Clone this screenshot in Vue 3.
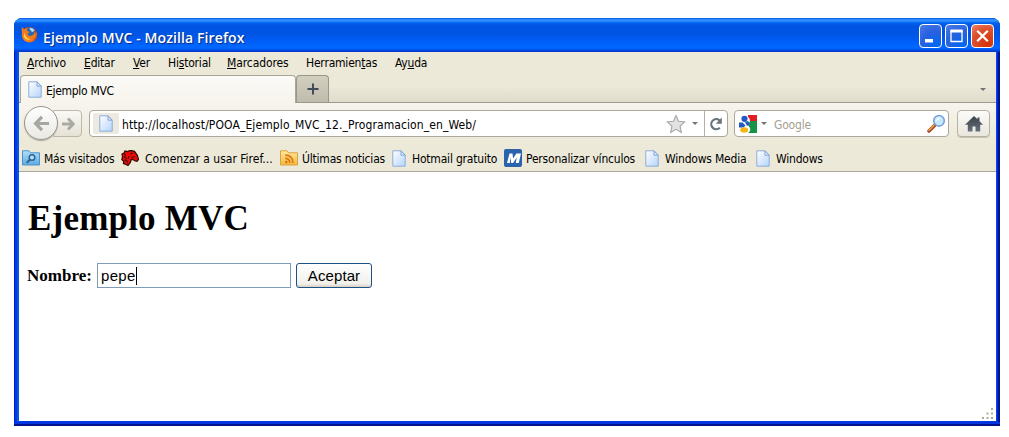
<script setup>
const menus = [
  { pre: '', key: 'A', post: 'rchivo', cls: 'm1' },
  { pre: '', key: 'E', post: 'ditar', cls: 'm2' },
  { pre: '', key: 'V', post: 'er', cls: 'm3' },
  { pre: 'Hi', key: 's', post: 'torial', cls: 'm4' },
  { pre: '', key: 'M', post: 'arcadores', cls: 'm5' },
  { pre: 'Herramien', key: 't', post: 'as', cls: 'm6' },
  { pre: 'Ay', key: 'u', post: 'da', cls: 'm7' },
]
const bookmarks = [
  { icon: 'folder', label: 'Más visitados', cls: 'b1' },
  { icon: 'dino', label: 'Comenzar a usar Firef...', cls: 'b2' },
  { icon: 'rss', label: 'Últimas noticias', cls: 'b3' },
  { icon: 'page', label: 'Hotmail gratuito', cls: 'b4' },
  { icon: 'm', label: 'Personalizar vínculos', cls: 'b5' },
  { icon: 'page', label: 'Windows Media', cls: 'b6' },
  { icon: 'page', label: 'Windows', cls: 'b7' },
]
</script>

<template>
  <div class="desk">
    <svg class="defs" width="0" height="0">
      <defs>
        <linearGradient id="pg" x1="0" y1="0" x2="1" y2="1">
          <stop offset="0" stop-color="#fff" /><stop offset="1" stop-color="#b4d5fb" />
        </linearGradient>
        <linearGradient id="fg" x1="0" y1="0" x2="0" y2="1">
          <stop offset="0" stop-color="#b4ddf6" /><stop offset="1" stop-color="#5eaae0" />
        </linearGradient>
        <linearGradient id="yg" x1="0" y1="0" x2="0" y2="1">
          <stop offset="0" stop-color="#ffe9a0" /><stop offset="1" stop-color="#f5b73d" />
        </linearGradient>
        <linearGradient id="hg" x1="0" y1="0" x2="0" y2="1">
          <stop offset="0" stop-color="#3a434b" /><stop offset="1" stop-color="#66707a" />
        </linearGradient>
        <radialGradient id="ff" cx=".4" cy=".6" r=".6">
          <stop offset="0" stop-color="#ffb52c" /><stop offset=".6" stop-color="#f3751a" /><stop offset="1" stop-color="#c43d0c" />
        </radialGradient>
        <symbol id="page" viewBox="0 0 14 17">
          <path d="M.8.8h8.200l4.200 4.400v11H.8z" fill="url(#pg)" stroke="#8fabda" />
          <path d="M9 .8v4.400h4.200z" fill="#dceafb" stroke="#7c9ed4" stroke-width=".9" />
        </symbol>
      </defs>
    </svg>
    <div class="window">
      <header class="titlebar">
        <svg class="fox" viewBox="0 0 18 18">
          <circle cx="9" cy="9.300" r="8.200" fill="url(#ff)" />
          <circle cx="10" cy="6.300" r="4.800" fill="#2469b5" />
          <path d="M9 1.800q4-.4 5.500 2.700L12 6.500 9.500 4z" fill="#a7dcf5" />
          <path d="M.8 1 3.500 3.500Q5.200 2.200 7 2.600l-.7 2.400 3 1.400-1.800 1.400q-1 .5-.2 1.600 1.800 1.900 5 .3 1.800-1 1.800-3.500 1 1.500.6 3.400l2-3.600q.6 7.400-7.200 8.600Q3 15 1.300 9.200.5 5.500.8 1z" fill="#f07a1e" />
          <path d="M4 7q.2 6.500 6.500 7-5.500 1.800-7.700-3.200z" fill="#ffd247" />
        </svg>
        <span class="title">Ejemplo MVC - Mozilla Firefox</span>
        <div class="controls">
          <span class="ctl"><svg viewBox="0 0 23 24"><path d="M6 15h8v3.500H6z" fill="#fff" /></svg></span>
          <span class="ctl"><svg viewBox="0 0 23 24"><path d="M6 7h11v10.500H6z" fill="none" stroke="#fff" stroke-width="1.300" /><path d="M5.400 5.500h12.200v3H5.400z" fill="#fff" /></svg></span>
          <span class="ctl close"><svg viewBox="0 0 23 24"><path d="m6.200 6.700 10.600 10.600m0-10.600L6.200 17.300" stroke="#fff" stroke-width="2.300" /></svg></span>
        </div>
      </header>

      <div class="body">
        <nav class="menubar">
          <span v-for="m in menus" :key="m.cls" :class="m.cls">{{ m.pre }}<u>{{ m.key }}</u>{{ m.post }}</span>
        </nav>
        <div class="tabs">
          <div class="tab"><svg class="pageicon"><use href="#page" /></svg><span>Ejemplo MVC</span></div>
          <div class="newtab"><svg viewBox="0 0 12 12"><path d="M6 .5v11M.5 6h11" stroke="#414b55" stroke-width="2" /></svg></div>
          <i class="tri tabtri"></i>
        </div>

        <div class="toolbar">
          <div class="arrows">
            <div class="back"><svg viewBox="0 0 18 18"><path d="M9.500 2 2.700 9l6.800 7M3 9h14" fill="none" stroke="#a5a5a2" stroke-width="3.400" /></svg></div>
            <div class="forward"><svg viewBox="0 0 14 14"><path d="m7 1.500 5.200 5.500L7 12.500M1 7h11" fill="none" stroke="#aaa9a4" stroke-width="2.900" /></svg></div>
          </div>
          <div class="url">
            <span class="identity"><svg class="pageicon"><use href="#page" /></svg></span>
            <span class="address">http://localhost/POOA_Ejemplo_MVC_12._Programacion_en_Web/</span>
            <svg class="star" viewBox="0 0 20 20"><path d="m10 1.500 2.500 5.700 6.200.7-4.600 4.200 1.200 6.300L10 15.300l-5.300 3.100L5.900 12.100 1.300 7.900l6.200-.7z" fill="#e2e2e2" stroke="#a6a6a6" stroke-width="1.100" /></svg>
            <i class="tri"></i>
            <span class="reload"><svg viewBox="0 0 14 14"><path d="M10.800 10.700A5 5 0 1 1 10.400 3.300" fill="none" stroke="#69737a" stroke-width="2.200" /><path d="M12.800.5v6.200H6.800z" fill="#69737a" /></svg></span>
          </div>
          <div class="search">
            <svg class="google" viewBox="0 0 18 18">
              <path d="M9 0h9v6h-7q0-3-2-4z" fill="#e31b23" />
              <path d="M11 6h7v12H9q3-2 2-5L9 10z" fill="#159447" />
              <circle cx="5.500" cy="3.800" r="3.100" fill="#2458c5" />
              <path d="M0 7.500h3.500l3 3-2 2H0z" fill="#2458c5" />
              <path d="m6 7 3-1 2 3-3 2z" fill="#2458c5" />
              <ellipse cx="5.200" cy="15" rx="4" ry="2.800" fill="#f7b51b" />
            </svg>
            <i class="tri"></i><span class="hint">Google</span>
            <svg class="lens" viewBox="0 0 19 19">
              <path d="m2 17 6-6" stroke="#a34b20" stroke-width="3.500" stroke-linecap="round" />
              <path d="m2 16.300 5-5" stroke="#f5a153" stroke-width="1.500" stroke-linecap="round" />
              <circle cx="12" cy="6.800" r="5.300" fill="#c3eafd" stroke="#7d9fd6" stroke-width="1.600" />
              <path d="M8.500 7q1-4 5-3.500-1 3-5 3.500z" fill="#f4fcff" />
            </svg>
          </div>
          <div class="home"><svg viewBox="0 0 18 16"><path d="M9 0 12.500 3.300V1.500h2v3.700L18 8.700H15.200V15.500H10.500V10.500H7.500V15.500H2.800V8.700H0z" fill="url(#hg)" /></svg></div>
        </div>

        <div class="bookmarks">
          <div v-for="b in bookmarks" :key="b.cls" class="bookmark" :class="b.cls">
            <svg v-if="b.icon === 'page'" class="pageicon"><use href="#page" /></svg>
            <svg v-else-if="b.icon === 'folder'" class="ico" viewBox="0 0 18 16">
              <path d="M.5 15V.8H7l1.500 2h9V15z" fill="url(#fg)" stroke="#4c95cb" />
              <circle cx="10" cy="7.500" r="2.800" fill="#b5def7" stroke="#286596" stroke-width="1.500" /><path d="M8 9.500 4.800 12.700" stroke="#286596" stroke-width="2" />
            </svg>
            <svg v-else-if="b.icon === 'dino'" class="ico" viewBox="0 0 18 16">
              <path d="M1 4 3 3l1-2 3 .5L9 .3l4.500 1 2.800 4 1.200 4-1.500 2-2.500-.5-1.500-1.500-2 .5-.5 2.500-2.500 3.200-2-1-2.500-1 .2-2.200L.8 9.500 1.500 7z" fill="#e60b08" stroke="#2b0906" stroke-width="1.200" />
              <path d="m3 4 2 1-2 2 2.500 1L4 10.500l2.500.5-.5 2M9 4l3-1M10 8l4-1.500M8 6l-1 3" fill="none" stroke="#3b0906" stroke-width=".9" />
            </svg>
            <svg v-else-if="b.icon === 'rss'" class="ico" viewBox="0 0 18 16">
              <path d="M.5 15V.8H7l1.500 2h9V15z" fill="url(#yg)" stroke="#dba13c" />
              <circle cx="6.300" cy="12" r="1.200" fill="#d76c0a" /><path d="M5.200 8.300q4.500 0 4.600 4.600M5.200 5.200q7.600.2 7.700 7.700" fill="none" stroke="#dc780e" stroke-width="1.700" />
            </svg>
            <svg v-else class="ico mico" viewBox="0 0 18 18">
              <rect width="18" height="18" rx="2" fill="#2a62ab" /><path d="m3 14 2.500-9.500h3l.6 5 3.300-5H17L14.800 14h-3.100l1.100-5.500L9 14H7.200L6.500 8.500 5.800 14z" fill="#fff" />
            </svg>
            <span>{{ b.label }}</span>
          </div>
        </div>

        <main class="content">
          <h1>Ejemplo MVC</h1>
          <div class="form">
            <b>Nombre:</b>
            <div class="field"><span>pepe</span><i></i></div>
            <button type="button">Aceptar</button>
          </div>
          <svg class="grip" viewBox="0 0 12 12"><path d="M9 0h2v2H9zM4.500 4.500h2v2h-2zM9 4.500h2v2H9zM0 9h2v2H0zM4.500 9h2v2h-2zM9 9h2v2H9z" fill="#b0ac9a" /></svg>
        </main>
      </div>
    </div>
  </div>
</template>

<style>
body { background: #fff; }
</style>
<style scoped>
* { box-sizing: border-box; }
.defs { position: absolute; }
.desk { width: 1009px; height: 437px; padding: 18px 0 0 14px; overflow: hidden; font-family: "DejaVu Sans Condensed", "DejaVu Sans", sans-serif; font-stretch: condensed; font-size: 12px; letter-spacing: -.2px; color: #000; }
svg { display: block; flex: none; }
span { white-space: nowrap; }
.window { width: 986px; height: 408px; border-radius: 8px 8px 0 0; background: linear-gradient(90deg, #0019cf 0 1px, #003be6 1px 3px, #0855dd 3px 5px, #0038e2 5px 982px, #0045ef 982px 983px, #002bd0 983px 984px, #00138c 984px); padding: 0 4px 5px 5px; box-shadow: inset 0 -2px #00138c, inset 0 -4px #0035df; }
.titlebar { height: 34px; margin: 0 -4px 0 -5px; padding: 2px 6px 0 7px; display: flex; align-items: center; border-radius: 8px 8px 0 0; background: linear-gradient(#0058e6 0, #3a93ff 2px, #288eff 3px, #0560ee 5px, #0054e3 8px, #0055e5 17px, #005ffa 24px, #0068ff 29px, #0060f8 31px, #003dd2 33px, #0038c8 34px); }
.fox { width: 17px; height: 17px; margin-top: -3px; }
.title { margin: 3px 0 0 5px; color: #fff; font: 600 14px/20px "Open Sans", "Noto Sans", sans-serif; letter-spacing: .1px; text-shadow: 1px 1px 1px #0b2a80; }
.controls { display: flex; gap: 3px; margin-left: auto; }
.ctl { width: 23px; height: 24px; border: 1px solid #fff; border-radius: 4px; background: radial-gradient(circle at 75% 90%, #0067f3, #2a61de 55%, #4b7ee8); overflow: hidden; }
.ctl svg { width: 23px; height: 24px; margin: -1px; }
.close { background: radial-gradient(circle at 75% 90%, #d43307, #dc4f2b 60%, #ee8263); }
.body { height: 369px; background: #ece9d8; display: flex; flex-direction: column; }
.menubar { height: 23px; padding-left: 8px; display: flex; line-height: 23px; }
u { text-decoration-thickness: 1px; text-underline-offset: 1px; }
.m1 { width: 57px; } .m2 { width: 49px; } .m3 { width: 35px; } .m4 { width: 59px; } .m5 { width: 79px; letter-spacing: -.1px; } .m6 { width: 89px; }
.tabs { height: 28px; display: flex; align-items: stretch; background: linear-gradient(#ece9d8 40%, #dfdccb); border-bottom: 1px solid #9b9989; }
.tab { width: 276px; height: 28px; margin-left: 1px; background: linear-gradient(#fbfaf7, #f6f4ec); border: 1px solid #a9a698; border-bottom: 0; border-radius: 4px 4px 0 0; display: flex; align-items: center; padding: 2px 0 0 7px; }
.pageicon { width: 14px; height: 17px; }
.tab .pageicon { margin-top: -2px; }
.tab span { margin-left: 4px; letter-spacing: -.3px; }
.newtab { width: 33px; border: 1px solid #99978a; border-bottom: 0; border-radius: 4px 4px 0 0; background: linear-gradient(#d2cfbf, #bfbcae); display: flex; align-items: center; justify-content: center; }
.newtab svg { width: 12px; height: 12px; }
.tri { border: 3px solid transparent; border-top-color: #737373; border-bottom: 0; width: 0; height: 0; flex: none; }
.tabtri { margin: 13px 10px 0 auto; }
.toolbar { height: 40px; display: flex; align-items: flex-start; padding: 7px 6px 0 5px; background: linear-gradient(#f6f4ed, #ece9d8); }
.arrows { display: flex; width: 59px; height: 27px; }
.back { width: 34px; height: 34px; margin-top: -4px; border: 1px solid #96948b; border-radius: 50%; background: linear-gradient(#fff, #e9e8e2); display: flex; align-items: center; justify-content: center; z-index: 1; box-shadow: 0 1px 1px #aaa89c; flex: none; }
.back svg { width: 17px; height: 17px; }
.forward { width: 29px; height: 27px; margin-left: -5px; border: 1px solid #bab7ab; border-radius: 0 4px 4px 0; background: linear-gradient(#faf9f5, #e5e2d5); display: flex; align-items: center; padding-left: 7px; }
.forward svg { width: 14px; height: 14px; }
.url, .search { height: 27px; border: 1px solid #aaa89c; border-radius: 4px; background: #fff; display: flex; align-items: center; }
.url { width: 639px; margin-left: 6px; padding-left: 3px; }
.identity { width: 26px; height: 21px; border-radius: 2px; background: #ece9df; display: flex; align-items: center; justify-content: center; }
.address { margin-left: 3px; padding-top: 2px; width: 544px; letter-spacing: .1px; }
.star { width: 20px; height: 20px; }
.star + .tri { margin: 0 6px; }
.reload { height: 25px; width: 23px; border-left: 1px solid #b3b1a7; display: flex; align-items: center; justify-content: center; }
.reload svg { width: 14px; height: 14px; }
.search { width: 215px; margin-left: 6px; padding: 0 2px 0 4px; }
.google { width: 18px; height: 18px; }
.google + .tri { margin: 0 7px 0 4px; }
.hint { color: #a39f91; padding-top: 2px; }
.lens { width: 19px; height: 19px; margin-left: auto; }
.home { width: 33px; height: 27px; margin-left: 8px; border: 1px solid #b5b2a5; border-radius: 4px; background: linear-gradient(#fcfbf9, #e9e6dc); display: flex; align-items: center; justify-content: center; box-shadow: 0 1px #c5c2b4; }
.home svg { width: 18px; height: 16px; }
.bookmarks { height: 29px; border-bottom: 1px solid #aca899; display: flex; padding: 2px 0 0 3px; }
.bookmark { display: flex; align-items: center; flex: none; }
.ico { width: 18px; height: 16px; }
.mico { height: 18px; }
.bookmark span { margin-left: 4px; padding-top: 1px; }
.b1 { width: 99px; } .b2 { width: 159px; } .bookmark.b2 span { margin-left: 6px; letter-spacing: 0; } .b3 { width: 112px; } .b4 { width: 112px; } .b5 { width: 141px; } .b6 { width: 111px; }
.bookmark.b4 span, .bookmark.b6 span, .bookmark.b7 span { margin-left: 6px; }
.content { flex: 1; background: #fff; padding: 0 0 0 8px; position: relative; letter-spacing: 0; font-family: "Liberation Serif", serif; }
h1 { margin: 0; padding: 25px 0 0 1px; font-size: 35px; line-height: 44px; letter-spacing: .2px; }
.form { display: flex; margin-top: 22px; height: 25px; align-items: center; }
.form b { width: 70px; font-size: 17px; }
.field { width: 194px; height: 25px; border: 1px solid #7f9db9; display: flex; align-items: center; padding-left: 3px; font: 15px "Liberation Sans", sans-serif; letter-spacing: .3px; }
.field i { width: 1px; height: 18px; background: #000; }
button { width: 76px; height: 25px; margin-left: 5px; padding: 0; border: 1px solid #1c5185; border-radius: 3px; background: linear-gradient(#fff, #f1f0ea 85%, #d8d0c4); color: #000; font: 15px "Liberation Sans", sans-serif; letter-spacing: .1px; }
.grip { position: absolute; right: 2px; bottom: 1px; width: 12px; height: 12px; }
</style>
